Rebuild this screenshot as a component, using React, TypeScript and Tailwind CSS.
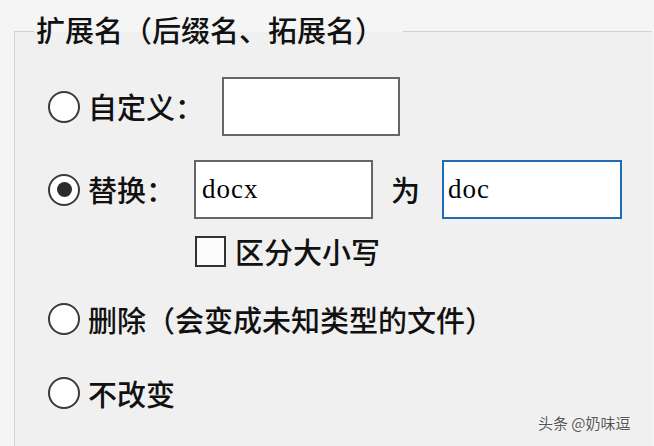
import React from "react";

const cjk = { fontFamily: '"Noto Sans CJK SC", "Noto Sans", sans-serif' };
const serif = { fontFamily: '"Liberation Serif", "DejaVu Serif", serif' };

function Radio({ checked }: { checked?: boolean }) {
  return (
    <div className="w-[32px] h-[32px] shrink-0 rounded-full border-2 border-[#3a3a3a] bg-white flex items-center justify-center">
      {checked && <div className="w-[15px] h-[15px] rounded-full bg-[#2b2b2b]" />}
    </div>
  );
}

function Label({ children }: { children: React.ReactNode }) {
  return (
    <span className="ml-[8px] text-[29px] leading-none font-medium text-[#111] whitespace-nowrap" style={cjk}>
      {children}
    </span>
  );
}

export default function App() {
  return (
    <div className="relative w-[654px] h-[446px] overflow-hidden bg-[#f5f5f5] pt-[31px] pl-[14px] pr-[2px]">
      <div className="relative h-full border-l border-t border-[#d2d2d2] bg-[#f0f0f0]">
        <span
          className="absolute left-[19px] top-[-17px] bg-[linear-gradient(to_bottom,#f5f5f5_17px,#f0f0f0_17px)] pl-[2px] pr-[19px] text-[29px] leading-[29px] font-medium text-[#111] whitespace-nowrap"
          style={cjk}
        >
          扩展名（后缀名、拓展名）
        </span>

        <div className="flex flex-col pl-[33px]">
          <div className="mt-[45px] h-[59px] flex items-center">
            <Radio />
            <Label>自定义：</Label>
            <div className="ml-[18px] w-[178px] h-[59px] border-2 border-[#666] bg-white" />
          </div>

          <div className="mt-[24px] h-[59px] flex items-center">
            <Radio checked />
            <Label>替换：</Label>
            <div className="ml-[19px] w-[179px] h-[59px] border-2 border-[#666] bg-white flex items-center pl-[6px]">
              <span className="text-[27px] tracking-[1px] text-black leading-none" style={serif}>
                docx
              </span>
            </div>
            <span className="ml-[18px] text-[29px] leading-none font-medium text-[#111]" style={cjk}>
              为
            </span>
            <div className="ml-[22px] w-[180px] h-[59px] border-2 border-[#1f6db5] bg-white flex items-center pl-[4px]">
              <span className="text-[27px] tracking-[1px] text-black leading-none" style={serif}>
                doc
              </span>
            </div>
          </div>

          <div className="mt-[16px] h-[32px] flex items-center ml-[147px]">
            <div className="w-[31px] h-[31px] shrink-0 border-2 border-[#333] bg-[#fbfbfb]" />
            <span className="ml-[9px] text-[29px] leading-none font-medium text-[#111]" style={cjk}>
              区分大小写
            </span>
          </div>

          <div className="mt-[36px] h-[32px] flex items-center">
            <Radio />
            <Label>删除（会变成未知类型的文件）</Label>
          </div>

          <div className="mt-[42px] h-[32px] flex items-center">
            <Radio />
            <Label>不改变</Label>
          </div>
        </div>
      </div>

      <span
        className="absolute left-[538px] top-[415px] text-[15px] leading-none text-[#555] whitespace-nowrap [text-shadow:0_0_2px_#fff,0_0_1px_#fff]"
        style={cjk}
      >
        头条 @奶味逗
      </span>
    </div>
  );
}
